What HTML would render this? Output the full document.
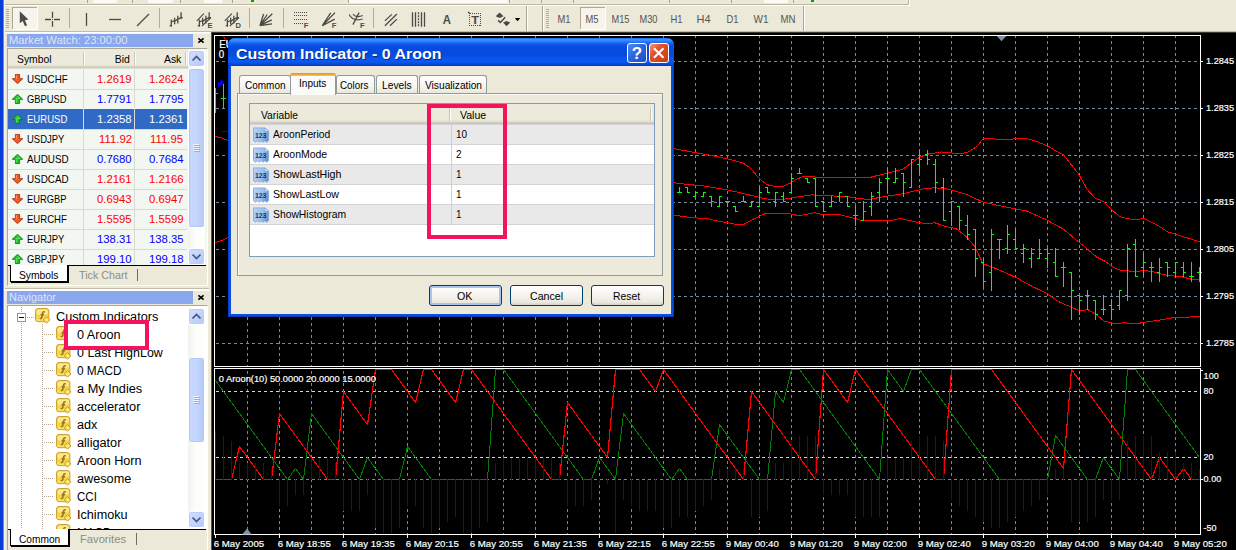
<!DOCTYPE html>
<html><head><meta charset="utf-8"><title>Custom Indicator - 0 Aroon</title>
<style>
*{box-sizing:border-box;margin:0;padding:0}
html,body{width:1236px;height:550px;overflow:hidden;background:#ECE9D8;font-family:"Liberation Sans",sans-serif;font-size:11px;color:#000}
.abs{position:absolute}
#root{position:relative;width:1236px;height:550px;overflow:hidden;background:#ECE9D8}
.t{position:absolute;white-space:nowrap;line-height:1}
.dlg-frame{background:#0650e2;border-radius:7px 7px 0 0;box-shadow:inset 1px 0 0 #0b3fd0,inset -1px 0 0 #0a34b8,inset 0 -1px 0 #0a34b8}
.dlg-title{border-radius:7px 7px 0 0;background:linear-gradient(180deg,#1c6aee 0,#3f93ff 6%,#2a7af8 13%,#0d55e8 23%,#064ae0 36%,#064ae0 60%,#0b55ec 72%,#0c58f0 85%,#0848dc 93%,#0438c4 100%)}
.tbtn{border:1px solid #fff;border-radius:3px}
.tbtn.help{background:linear-gradient(135deg,#4f8cf0 0,#2a63dc 50%,#1f4fc4 100%)}
.tbtn.help span{position:absolute;left:0;top:0;width:18px;text-align:center;color:#fff;font-weight:bold;font-size:17px;line-height:19px}
.tbtn.close{background:linear-gradient(135deg,#f0a080 0,#e2512c 35%,#c93a14 100%)}
.tbtn.close svg{position:absolute;left:-1px;top:-1px}
.dlg-body{background:#ece9d8}
.pane{border:1px solid #919b9c;background:#edeadb;box-shadow:inset 1px 1px 0 #fbfaf6}
.tab{border:1px solid #919b9c;border-bottom:none;border-radius:3px 3px 0 0;background:linear-gradient(180deg,#fff 0,#f6f5ef 60%,#e9e7dc 100%)}
.tab.sel{background:#fbfbf8;border-top:none}
.tab.sel:before{content:"";position:absolute;left:-1px;top:0;width:46px;height:3px;border-radius:3px 3px 0 0;background:linear-gradient(180deg,#e68b2c,#ffc73c)}
.lv{border:1px solid #7f9db9;background:#fff}
.lvh{background:linear-gradient(180deg,#ebeadb 0,#ebeadb 80%,#e0dcca 88%,#d1cdbc 94%,#c5c1b0 100%)}
.lvsep{background:linear-gradient(90deg,#c7c5b2 50%,#fff 50%)}
.row{border-top:1px solid #d4d4d4;border-bottom:1px solid #d4d4d4;background:#fff}
.row.odd{background:#e9e9e9}
.btn{border:1px solid #003c74;border-radius:3px;background:linear-gradient(180deg,#fff 0,#f4f3ee 50%,#ebe9df 85%,#d6d0c5 100%)}
.btn.def{box-shadow:inset 0 0 0 2px #a9c3f0}
.dock-title{background:#8aa6ec}
.mwh{background:linear-gradient(180deg,#ebeadb 0,#ebeadb 78%,#e2decd 84%,#d4d0bf 90%,#c8c4b3 95%,#f8f8f4 100%)}
.sbtn{border:1px solid #fff;border-radius:3px;background:linear-gradient(135deg,#d3e0fd 0,#c1d2fb 60%,#b4c8f6 100%);box-shadow:inset 0 0 0 1px #b9cdf9}
.sthumb{border:1px solid #fff;border-radius:3px;background:linear-gradient(90deg,#c9d9fd 0,#c3d5fd 50%,#b7caf5 100%);box-shadow:inset 0 0 0 1px #b4c8f6}
</style></head>
<body><div id="root">
<div class="abs" style="left:0;top:0;width:4px;height:550px;background:linear-gradient(90deg,#0a3cd8 0,#0a3cd8 3px,#6785e6 3px)"></div>
<svg class="abs" style="left:0;top:0" width="1236" height="34" viewBox="0 0 1236 34" font-family="Liberation Sans, sans-serif">
<g shape-rendering="crispEdges">
<rect x="4" y="0" width="905" height="4" fill="#ece9d8"/>
<rect x="93" y="0" width="24" height="3" fill="#fbfaf6"/>
<rect x="148" y="0" width="25" height="3" fill="#fbfaf6"/>
<rect x="204" y="0" width="18" height="3" fill="#fbfaf6"/>
<rect x="349" y="0" width="159" height="3" fill="#fbfaf6"/>
<rect x="764" y="0" width="24" height="3" fill="#fbfaf6"/>
<rect x="87" y="0" width="1" height="3" fill="#a9a392"/>
<rect x="132" y="0" width="1" height="3" fill="#a9a392"/>
<rect x="180" y="0" width="1" height="3" fill="#a9a392"/>
<rect x="232" y="0" width="1" height="3" fill="#a9a392"/>
<rect x="348" y="0" width="1" height="3" fill="#a9a392"/>
<rect x="509" y="0" width="1" height="3" fill="#a9a392"/>
<rect x="541" y="0" width="1" height="3" fill="#a9a392"/>
<rect x="573" y="0" width="1" height="3" fill="#a9a392"/>
<rect x="669" y="0" width="1" height="3" fill="#a9a392"/>
<rect x="731" y="0" width="1" height="3" fill="#a9a392"/>
<rect x="793" y="0" width="1" height="3" fill="#a9a392"/>
<rect x="251" y="0" width="3" height="2" fill="#00a000"/><rect x="811" y="0" width="3" height="2" fill="#00a000"/>
<rect x="4" y="4" width="905" height="1" fill="#bdb5a2"/>
<rect x="908" y="0" width="1" height="5" fill="#bdb5a2"/>
<rect x="4" y="5" width="906" height="1" fill="#fff"/><rect x="909" y="0" width="1" height="6" fill="#fff"/>
<rect x="4" y="31" width="1232" height="1" fill="#c4bca8"/><rect x="212" y="32" width="1024" height="1" fill="#3a362c"/>
<rect x="4" y="32" width="208" height="1" fill="#fff"/>
<rect x="6" y="9" width="3" height="1" fill="#b5ad9b"/>
<rect x="6" y="11" width="3" height="1" fill="#b5ad9b"/>
<rect x="6" y="13" width="3" height="1" fill="#b5ad9b"/>
<rect x="6" y="15" width="3" height="1" fill="#b5ad9b"/>
<rect x="6" y="17" width="3" height="1" fill="#b5ad9b"/>
<rect x="6" y="19" width="3" height="1" fill="#b5ad9b"/>
<rect x="6" y="21" width="3" height="1" fill="#b5ad9b"/>
<rect x="6" y="23" width="3" height="1" fill="#b5ad9b"/>
<rect x="6" y="25" width="3" height="1" fill="#b5ad9b"/>
<rect x="6" y="27" width="3" height="1" fill="#b5ad9b"/>
<rect x="546" y="9" width="3" height="1" fill="#b5ad9b"/>
<rect x="546" y="11" width="3" height="1" fill="#b5ad9b"/>
<rect x="546" y="13" width="3" height="1" fill="#b5ad9b"/>
<rect x="546" y="15" width="3" height="1" fill="#b5ad9b"/>
<rect x="546" y="17" width="3" height="1" fill="#b5ad9b"/>
<rect x="546" y="19" width="3" height="1" fill="#b5ad9b"/>
<rect x="546" y="21" width="3" height="1" fill="#b5ad9b"/>
<rect x="546" y="23" width="3" height="1" fill="#b5ad9b"/>
<rect x="546" y="25" width="3" height="1" fill="#b5ad9b"/>
<rect x="546" y="27" width="3" height="1" fill="#b5ad9b"/>
<rect x="69" y="8" width="1" height="20" fill="#b5ad99"/>
<rect x="159" y="8" width="1" height="20" fill="#b5ad99"/>
<rect x="249" y="8" width="1" height="20" fill="#b5ad99"/>
<rect x="283" y="8" width="1" height="20" fill="#b5ad99"/>
<rect x="373" y="8" width="1" height="20" fill="#b5ad99"/>
<rect x="526" y="6" width="1" height="25" fill="#aca592"/><rect x="527" y="6" width="1" height="25" fill="#fff"/>
<rect x="542" y="6" width="1" height="25" fill="#aca592"/><rect x="543" y="6" width="1" height="25" fill="#fff"/>
<rect x="803" y="6" width="1" height="25" fill="#aca592"/><rect x="804" y="6" width="1" height="25" fill="#fff"/>
<rect x="12" y="7" width="26" height="23" fill="#f6f4ec"/>
<rect x="12" y="7" width="26" height="1" fill="#b0a893"/><rect x="12" y="7" width="1" height="23" fill="#b0a893"/>
<rect x="12" y="29" width="26" height="1" fill="#fff"/><rect x="37" y="7" width="1" height="23" fill="#fff"/>
<rect x="580" y="7" width="26" height="23" fill="#f6f4ec"/>
<rect x="580" y="7" width="26" height="1" fill="#b0a893"/><rect x="580" y="7" width="1" height="23" fill="#b0a893"/>
<rect x="580" y="29" width="26" height="1" fill="#fff"/><rect x="605" y="7" width="1" height="23" fill="#fff"/>
</g>
<g stroke="#4b4b45" stroke-width="1.3" fill="none" stroke-linecap="butt">
<path d="M19.8 11.3V23.3L22.7 21L25 26.2L27.1 25.3L24.9 20.2L28.4 19.6Z" fill="#4b4b45" stroke="none"/>
<path d="M45 19.5H51M54 19.5H60M52.5 11.8V18M52.5 21V26.8"/><path d="M52 19.5H53" stroke-width="1"/>
<path d="M86.5 13V25.8"/><path d="M109 19.5H121"/><path d="M137 26L149 14"/>
<path d="M171.3 19.5V26.8M169.7 25.7H171.3M171.3 22L174.6 20.5M174.6 17.7V24.2M174.6 21.5L177.8 19M177.8 15.8V23.5M177.8 19.5L181.1 17.3M181.1 12.2V19.2M181.1 17.7H182.7"/>
<path d="M199.4 19.5V26.8M197.8 25.7H199.4M199.4 22L202.7 20.5M202.7 17.7V24.2M202.7 21.5L205.9 19M205.9 15.8V23.5M205.9 19.5L209.2 17.3M209.2 12.2V19.2M209.2 17.7H210.8"/>
<path d="M196.8 20.9L203.9 13.6M201.9 26L211 17.5" stroke-width="1.1"/>
<path d="M227.4 19.5V26.8M225.8 25.7H227.4M227.4 22L230.7 20.5M230.7 17.7V24.2M230.7 21.5L233.9 19M233.9 15.8V23.5M233.9 19.5L237.2 17.3M237.2 12.2V19.2M237.2 17.7H238.8"/>
<path d="M224.8 20.9L231.9 13.6M229.9 26L239 17.5" stroke-width="1.1"/>
<path d="M259.9 25.7L263.6 14M259.9 25.7L267.2 14.5M259.9 25.7L272.3 13.7M259.9 25.7L271.8 19.8M259.9 25.7L272 23.9"/>
<g stroke-dasharray="1 1" stroke-width="1.1" shape-rendering="crispEdges"><path d="M294 12.5H307M294 15.5H307M294 19.5H307M294 23.5H303"/></g>
<path d="M322.3 25.7L330.7 12.9M322.3 25.7L335 12.6M322.3 25.7L334.7 19.1"/>
<path d="M352.9 24.6L359.1 12.6"/><path d="M349.2 14.4Q351.5 19.2 357 19.8Q360 20 362.7 19.1M352.9 14.2Q354.8 16.6 358 16.6Q360.8 16.4 362.7 15.4" stroke-width="1.1"/>
<path d="M384.9 20.9L391.8 14.4M384.9 25.7L396.9 14M390 25.7L396.9 19.1"/>
<path d="M412.5 12.2V26.8M415.5 12.2V26.8M421.5 12.2V26.8M424.5 12.2V26.8"/><path d="M418.5 12.2V26.8" stroke-dasharray="2 1"/>
<rect x="469.5" y="13.5" width="11" height="12" stroke-dasharray="1 1" stroke-width="1.1" shape-rendering="crispEdges"/><path d="M468 12L470.2 13.8" />
<path d="M499.5 12.5L503.5 16.3L499.5 18L495.7 16.3Z" fill="#4b4b45" stroke="none"/><path d="M506.6 26.2L503 22.6L506.6 21L510.2 22.6Z" fill="#4b4b45" stroke="none"/><path d="M498 20.4L500.4 22.4L505.2 17.2" stroke-width="1.5"/>
<path d="M514.8 18H520.2L517.5 21.2Z" fill="#000" stroke="none"/>
</g>
<g fill="#4b4b45" font-weight="bold" font-size="7.6px">
<text x="207.5" y="27.9">E</text><text x="235.6" y="27.9">D</text><text x="303.7" y="27.8">F</text><text x="331.7" y="27.8">F</text><text x="360" y="27.8">F</text>
</g>
<text x="442.8" y="23.9" font-size="12.3px" font-weight="bold" fill="#4b4b45" textLength="8.2" lengthAdjust="spacingAndGlyphs">A</text>
<text x="471.3" y="24.1" font-size="10.6px" font-weight="bold" fill="#4b4b45" textLength="7.8" lengthAdjust="spacingAndGlyphs">T</text>
<text x="557.5" y="23.3" font-size="11px" fill="#55554f" textLength="13" lengthAdjust="spacingAndGlyphs">M1</text>
<text x="585.5" y="23.3" font-size="11px" fill="#55554f" textLength="13" lengthAdjust="spacingAndGlyphs">M5</text>
<text x="611.5" y="23.3" font-size="11px" fill="#55554f" textLength="18" lengthAdjust="spacingAndGlyphs">M15</text>
<text x="639.5" y="23.3" font-size="11px" fill="#55554f" textLength="18" lengthAdjust="spacingAndGlyphs">M30</text>
<text x="670.5" y="23.3" font-size="11px" fill="#55554f" textLength="12" lengthAdjust="spacingAndGlyphs">H1</text>
<text x="696.5" y="23.3" font-size="11px" fill="#55554f" textLength="14" lengthAdjust="spacingAndGlyphs">H4</text>
<text x="726.5" y="23.3" font-size="11px" fill="#55554f" textLength="12" lengthAdjust="spacingAndGlyphs">D1</text>
<text x="753.5" y="23.3" font-size="11px" fill="#55554f" textLength="15" lengthAdjust="spacingAndGlyphs">W1</text>
<text x="780.5" y="23.3" font-size="11px" fill="#55554f" textLength="15" lengthAdjust="spacingAndGlyphs">MN</text>
</svg>
<div class="abs " style="left:4px;top:32px;width:206px;height:1px;background:#fff"></div>
<div class="abs " style="left:4px;top:33px;width:206px;height:1px;background:#f6f4e8"></div>
<div class="abs " style="left:4px;top:0px;width:1px;height:550px;background:#f4f3ee"></div>
<div class="abs dock-title" style="left:7px;top:34px;width:186px;height:13px;"></div>
<div class="t " style="left:9.30px;top:35.29px;font-size:11px;color:#dde6f8;transform:scaleX(1.0183);transform-origin:0 0;">Market Watch: 23:00:00</div>
<svg class="abs" style="left:197px;top:37px" width="8" height="7"><path d="M1.4 1.4L6.6 5.6M6.6 1.4L1.4 5.6" stroke="#000" stroke-width="1.7"/></svg>
<div class="abs " style="left:7px;top:48px;width:201px;height:238px;border:1px solid #aca899;border-right-color:#fff;border-bottom-color:#fff;background:#f3f7f2"></div>
<div class="abs mwh" style="left:8px;top:49px;width:180px;height:20px;"></div>
<div class="abs " style="left:83px;top:52px;width:2px;height:13px;background:linear-gradient(90deg,#c9c6b4 50%,#fff 50%)"></div>
<div class="abs " style="left:134px;top:52px;width:2px;height:13px;background:linear-gradient(90deg,#c9c6b4 50%,#fff 50%)"></div>
<div class="abs " style="left:185px;top:52px;width:2px;height:13px;background:linear-gradient(90deg,#c9c6b4 50%,#fff 50%)"></div>
<div class="t " style="left:16.50px;top:53.89px;font-size:11px;color:#000;transform:scaleX(0.9405);transform-origin:0 0;">Symbol</div>
<div class="t " style="left:114.10px;top:53.89px;font-size:11px;color:#000;transform:scaleX(0.9500);transform-origin:100% 0;">Bid</div>
<div class="t " style="left:162.86px;top:53.89px;font-size:11px;color:#000;transform:scaleX(0.9500);transform-origin:100% 0;">Ask</div>
<div class="abs " style="left:0px;top:0px;width:210px;height:265px;overflow:hidden"><div class="abs " style="left:8px;top:89px;width:179px;height:1px;background:#d9dbd3"></div>
<svg class="abs" style="left:12px;top:74px" width="11" height="10" viewBox="0 0 11 10"><path d="M5.5 9.7L10.7 4.7H7.6V0.4H3.4V4.7H0.3Z" fill="#ee5a24" stroke="#b02c0c" stroke-width="0.9"/><path d="M4.3 1.2V5.2" fill="none" stroke="#ffb48a" stroke-width="0.9" opacity="0.8"/></svg>
<div class="t " style="left:26.80px;top:74.29px;font-size:11px;color:#000;transform:scaleX(0.8880);transform-origin:0 0;">USDCHF</div>
<div class="t " style="left:98.15px;top:74.29px;font-size:11px;color:#ff0000;transform:scaleX(1.0300);transform-origin:100% 0;">1.2619</div>
<div class="t " style="left:149.55px;top:74.29px;font-size:11px;color:#ff0000;transform:scaleX(1.0300);transform-origin:100% 0;">1.2624</div>
<div class="abs " style="left:8px;top:109px;width:179px;height:1px;background:#d9dbd3"></div>
<svg class="abs" style="left:12px;top:94px" width="11" height="10" viewBox="0 0 11 10"><path d="M5.5 0.3L10.7 5.3H7.6V9.6H3.4V5.3H0.3Z" fill="#22c32a" stroke="#0b7a12" stroke-width="0.9"/><path d="M5.5 2L8 4.6H4.2V8.6" fill="none" stroke="#9df59f" stroke-width="0.8" opacity="0.7"/></svg>
<div class="t " style="left:26.80px;top:94.29px;font-size:11px;color:#000;transform:scaleX(0.8503);transform-origin:0 0;">GBPUSD</div>
<div class="t " style="left:98.15px;top:94.29px;font-size:11px;color:#0000ff;transform:scaleX(1.0300);transform-origin:100% 0;">1.7791</div>
<div class="t " style="left:149.55px;top:94.29px;font-size:11px;color:#0000ff;transform:scaleX(1.0300);transform-origin:100% 0;">1.7795</div>
<div class="abs " style="left:8px;top:109px;width:179px;height:20px;background:#316ac5"></div>
<div class="abs " style="left:8px;top:129px;width:179px;height:1px;background:#d9dbd3"></div>
<svg class="abs" style="left:12px;top:114px" width="11" height="10" viewBox="0 0 11 10"><path d="M5.5 0.3L10.7 5.3H7.6V9.6H3.4V5.3H0.3Z" fill="#22c32a" stroke="#0b7a12" stroke-width="0.9"/><path d="M5.5 2L8 4.6H4.2V8.6" fill="none" stroke="#9df59f" stroke-width="0.8" opacity="0.7"/></svg>
<div class="t " style="left:26.80px;top:114.29px;font-size:11px;color:#fff;transform:scaleX(0.8676);transform-origin:0 0;">EURUSD</div>
<div class="t " style="left:98.15px;top:114.29px;font-size:11px;color:#fff;transform:scaleX(1.0300);transform-origin:100% 0;">1.2358</div>
<div class="t " style="left:149.55px;top:114.29px;font-size:11px;color:#fff;transform:scaleX(1.0300);transform-origin:100% 0;">1.2361</div>
<div class="abs " style="left:8px;top:149px;width:179px;height:1px;background:#d9dbd3"></div>
<svg class="abs" style="left:12px;top:134px" width="11" height="10" viewBox="0 0 11 10"><path d="M5.5 9.7L10.7 4.7H7.6V0.4H3.4V4.7H0.3Z" fill="#ee5a24" stroke="#b02c0c" stroke-width="0.9"/><path d="M4.3 1.2V5.2" fill="none" stroke="#ffb48a" stroke-width="0.9" opacity="0.8"/></svg>
<div class="t " style="left:26.80px;top:134.29px;font-size:11px;color:#000;transform:scaleX(0.8594);transform-origin:0 0;">USDJPY</div>
<div class="t " style="left:99.79px;top:134.29px;font-size:11px;color:#ff0000;transform:scaleX(1.0300);transform-origin:100% 0;">111.92</div>
<div class="t " style="left:151.19px;top:134.29px;font-size:11px;color:#ff0000;transform:scaleX(1.0300);transform-origin:100% 0;">111.95</div>
<div class="abs " style="left:8px;top:169px;width:179px;height:1px;background:#d9dbd3"></div>
<svg class="abs" style="left:12px;top:154px" width="11" height="10" viewBox="0 0 11 10"><path d="M5.5 0.3L10.7 5.3H7.6V9.6H3.4V5.3H0.3Z" fill="#22c32a" stroke="#0b7a12" stroke-width="0.9"/><path d="M5.5 2L8 4.6H4.2V8.6" fill="none" stroke="#9df59f" stroke-width="0.8" opacity="0.7"/></svg>
<div class="t " style="left:26.80px;top:154.29px;font-size:11px;color:#000;transform:scaleX(0.8956);transform-origin:0 0;">AUDUSD</div>
<div class="t " style="left:98.15px;top:154.29px;font-size:11px;color:#0000ff;transform:scaleX(1.0300);transform-origin:100% 0;">0.7680</div>
<div class="t " style="left:149.55px;top:154.29px;font-size:11px;color:#0000ff;transform:scaleX(1.0300);transform-origin:100% 0;">0.7684</div>
<div class="abs " style="left:8px;top:189px;width:179px;height:1px;background:#d9dbd3"></div>
<svg class="abs" style="left:12px;top:174px" width="11" height="10" viewBox="0 0 11 10"><path d="M5.5 9.7L10.7 4.7H7.6V0.4H3.4V4.7H0.3Z" fill="#ee5a24" stroke="#b02c0c" stroke-width="0.9"/><path d="M4.3 1.2V5.2" fill="none" stroke="#ffb48a" stroke-width="0.9" opacity="0.8"/></svg>
<div class="t " style="left:26.80px;top:174.29px;font-size:11px;color:#000;transform:scaleX(0.8956);transform-origin:0 0;">USDCAD</div>
<div class="t " style="left:98.15px;top:174.29px;font-size:11px;color:#ff0000;transform:scaleX(1.0300);transform-origin:100% 0;">1.2161</div>
<div class="t " style="left:149.55px;top:174.29px;font-size:11px;color:#ff0000;transform:scaleX(1.0300);transform-origin:100% 0;">1.2166</div>
<div class="abs " style="left:8px;top:209px;width:179px;height:1px;background:#d9dbd3"></div>
<svg class="abs" style="left:12px;top:194px" width="11" height="10" viewBox="0 0 11 10"><path d="M5.5 9.7L10.7 4.7H7.6V0.4H3.4V4.7H0.3Z" fill="#ee5a24" stroke="#b02c0c" stroke-width="0.9"/><path d="M4.3 1.2V5.2" fill="none" stroke="#ffb48a" stroke-width="0.9" opacity="0.8"/></svg>
<div class="t " style="left:26.80px;top:194.29px;font-size:11px;color:#000;transform:scaleX(0.8503);transform-origin:0 0;">EURGBP</div>
<div class="t " style="left:98.15px;top:194.29px;font-size:11px;color:#ff0000;transform:scaleX(1.0300);transform-origin:100% 0;">0.6943</div>
<div class="t " style="left:149.55px;top:194.29px;font-size:11px;color:#ff0000;transform:scaleX(1.0300);transform-origin:100% 0;">0.6947</div>
<div class="abs " style="left:8px;top:229px;width:179px;height:1px;background:#d9dbd3"></div>
<svg class="abs" style="left:12px;top:214px" width="11" height="10" viewBox="0 0 11 10"><path d="M5.5 9.7L10.7 4.7H7.6V0.4H3.4V4.7H0.3Z" fill="#ee5a24" stroke="#b02c0c" stroke-width="0.9"/><path d="M4.3 1.2V5.2" fill="none" stroke="#ffb48a" stroke-width="0.9" opacity="0.8"/></svg>
<div class="t " style="left:26.80px;top:214.29px;font-size:11px;color:#000;transform:scaleX(0.8684);transform-origin:0 0;">EURCHF</div>
<div class="t " style="left:98.15px;top:214.29px;font-size:11px;color:#ff0000;transform:scaleX(1.0300);transform-origin:100% 0;">1.5595</div>
<div class="t " style="left:149.55px;top:214.29px;font-size:11px;color:#ff0000;transform:scaleX(1.0300);transform-origin:100% 0;">1.5599</div>
<div class="abs " style="left:8px;top:249px;width:179px;height:1px;background:#d9dbd3"></div>
<svg class="abs" style="left:12px;top:234px" width="11" height="10" viewBox="0 0 11 10"><path d="M5.5 0.3L10.7 5.3H7.6V9.6H3.4V5.3H0.3Z" fill="#22c32a" stroke="#0b7a12" stroke-width="0.9"/><path d="M5.5 2L8 4.6H4.2V8.6" fill="none" stroke="#9df59f" stroke-width="0.8" opacity="0.7"/></svg>
<div class="t " style="left:26.80px;top:234.29px;font-size:11px;color:#000;transform:scaleX(0.8594);transform-origin:0 0;">EURJPY</div>
<div class="t " style="left:98.15px;top:234.29px;font-size:11px;color:#0000ff;transform:scaleX(1.0300);transform-origin:100% 0;">138.31</div>
<div class="t " style="left:149.55px;top:234.29px;font-size:11px;color:#0000ff;transform:scaleX(1.0300);transform-origin:100% 0;">138.35</div>
<div class="abs " style="left:8px;top:269px;width:179px;height:1px;background:#d9dbd3"></div>
<svg class="abs" style="left:12px;top:254px" width="11" height="10" viewBox="0 0 11 10"><path d="M5.5 0.3L10.7 5.3H7.6V9.6H3.4V5.3H0.3Z" fill="#22c32a" stroke="#0b7a12" stroke-width="0.9"/><path d="M5.5 2L8 4.6H4.2V8.6" fill="none" stroke="#9df59f" stroke-width="0.8" opacity="0.7"/></svg>
<div class="t " style="left:26.80px;top:254.29px;font-size:11px;color:#000;transform:scaleX(0.8639);transform-origin:0 0;">GBPJPY</div>
<div class="t " style="left:98.15px;top:254.29px;font-size:11px;color:#0000ff;transform:scaleX(1.0300);transform-origin:100% 0;">199.10</div>
<div class="t " style="left:149.55px;top:254.29px;font-size:11px;color:#0000ff;transform:scaleX(1.0300);transform-origin:100% 0;">199.18</div>
<div class="abs " style="left:83px;top:69px;width:1px;height:197px;background:#d9dbd3"></div>
<div class="abs " style="left:83px;top:109px;width:1px;height:20px;background:#dcdcd4"></div>
<div class="abs " style="left:134px;top:69px;width:1px;height:197px;background:#d9dbd3"></div>
<div class="abs " style="left:134px;top:109px;width:1px;height:20px;background:#dcdcd4"></div></div>
<div class="abs " style="left:188px;top:50px;width:17px;height:215px;background:linear-gradient(90deg,#f3f1ec 0,#fcfcfa 40%,#fefefb 100%)"></div>
<div class="abs sbtn" style="left:188px;top:50px;width:17px;height:17px;"></div><svg class="abs" style="left:188px;top:50px" width="17" height="17"><path d="M4.5 10.5L8.5 6.5L12.5 10.5" fill="none" stroke="#44557f" stroke-width="1.7"/></svg>
<div class="abs sbtn" style="left:188px;top:248px;width:17px;height:17px;"></div><svg class="abs" style="left:188px;top:248px" width="17" height="17"><path d="M4.5 6.5L8.5 10.5L12.5 6.5" fill="none" stroke="#44557f" stroke-width="1.7"/></svg>
<div class="abs sthumb" style="left:188px;top:68px;width:17px;height:160px;"></div>
<svg class="abs" style="left:192px;top:144px" width="9" height="9" shape-rendering="crispEdges"><rect x="1" y="0" width="6" height="1" fill="#eef4fe"/><rect x="2" y="1" width="6" height="1" fill="#8cb0f8"/><rect x="1" y="2" width="6" height="1" fill="#eef4fe"/><rect x="2" y="3" width="6" height="1" fill="#8cb0f8"/><rect x="1" y="4" width="6" height="1" fill="#eef4fe"/><rect x="2" y="5" width="6" height="1" fill="#8cb0f8"/><rect x="1" y="6" width="6" height="1" fill="#eef4fe"/><rect x="2" y="7" width="6" height="1" fill="#8cb0f8"/></svg>
<div class="abs " style="left:8px;top:265px;width:198px;height:1px;background:#000"></div>
<div class="abs " style="left:8px;top:266px;width:199px;height:19px;background:#ece9d8"></div>
<div class="abs " style="left:10px;top:265px;width:58px;height:17px;background:#fff;border:1px solid #000;border-top:none;box-shadow:1px 1px 0 #000"></div>
<div class="t " style="left:19.20px;top:269.69px;font-size:11px;color:#000;transform:scaleX(0.9364);transform-origin:0 0;">Symbols</div>
<div class="t " style="left:78.80px;top:269.69px;font-size:11px;color:#8d8d82;transform:scaleX(0.9756);transform-origin:0 0;">Tick Chart</div>
<div class="abs " style="left:137px;top:269px;width:1px;height:12px;background:#6f6f66"></div>
<div class="abs " style="left:5px;top:288px;width:204px;height:1px;background:#c2bcaa"></div>
<div class="abs " style="left:5px;top:289px;width:204px;height:2px;background:#fff"></div>
<div class="abs dock-title" style="left:7px;top:291px;width:186px;height:13px;"></div>
<div class="t " style="left:9.30px;top:292.29px;font-size:11px;color:#dde6f8;transform:scaleX(0.9983);transform-origin:0 0;">Navigator</div>
<svg class="abs" style="left:197px;top:294px" width="8" height="7"><path d="M1.4 1.4L6.6 5.6M6.6 1.4L1.4 5.6" stroke="#000" stroke-width="1.7"/></svg>
<div class="abs " style="left:7px;top:305px;width:201px;height:245px;border:1px solid #aca899;border-right-color:#fff;border-bottom:none;background:#fff"></div>
<div class="abs " style="left:0px;top:0px;width:188px;height:529px;overflow:hidden"><svg class="abs" style="left:0;top:0" width="210" height="529" shape-rendering="crispEdges"><g stroke="#b9a392" stroke-width="1" stroke-dasharray="1 1" fill="none"><path d="M21.5 307V312M21.5 323V529M27 317.5H35M42.5 324V529"/><path d="M44 334.5H54"/><path d="M44 352.5H54"/><path d="M44 370.5H54"/><path d="M44 388.5H54"/><path d="M44 406.5H54"/><path d="M44 424.5H54"/><path d="M44 442.5H54"/><path d="M44 460.5H54"/><path d="M44 478.5H54"/><path d="M44 496.5H54"/><path d="M44 514.5H54"/></g><rect x="17.5" y="313.5" width="8" height="8" fill="#fff" stroke="#7b9ebd"/><path d="M19 317.5H24" stroke="#000"/></svg>
<svg class="abs" style="left:35px;top:308px" width="16" height="16" viewBox="0 0 16 16"><rect x="0.5" y="0.5" width="13.4" height="13.2" rx="2.6" fill="#f4d448" stroke="#cfa02c"/><rect x="1.6" y="1.5" width="11.2" height="5.2" rx="2" fill="#fcf0a4" opacity="0.75"/><rect x="1.6" y="11" width="11.2" height="1.8" rx="0.9" fill="#fbe779" opacity="0.9"/><path d="M9.8 4.1C8.7 3.3 7.7 4 7.5 5.4L6.8 9.4C6.6 10.6 5.7 10.9 4.8 10.3M5.6 6.6H9.1" fill="none" stroke="#9a7416" stroke-width="1.55"/><path d="M11.6 8.6L14.9 11.9L11.6 15.2L8.3 11.9Z" fill="#f8dc5c" stroke="#c6962a" stroke-width="0.9"/><path d="M11.6 10.2L13.3 11.9L11.6 13.2L9.9 11.9Z" fill="#fdf2b0" opacity="0.7"/></svg>
<div class="t " style="left:56.30px;top:310.72px;font-size:12.5px;color:#000;transform:scaleX(1.0155);transform-origin:0 0;">Custom Indicators</div>
<svg class="abs" style="left:56px;top:326px" width="16" height="16" viewBox="0 0 16 16"><rect x="0.5" y="0.5" width="13.4" height="13.2" rx="2.6" fill="#f4d448" stroke="#cfa02c"/><rect x="1.6" y="1.5" width="11.2" height="5.2" rx="2" fill="#fcf0a4" opacity="0.75"/><rect x="1.6" y="11" width="11.2" height="1.8" rx="0.9" fill="#fbe779" opacity="0.9"/><path d="M9.8 4.1C8.7 3.3 7.7 4 7.5 5.4L6.8 9.4C6.6 10.6 5.7 10.9 4.8 10.3M5.6 6.6H9.1" fill="none" stroke="#9a7416" stroke-width="1.55"/><path d="M11.6 8.6L14.9 11.9L11.6 15.2L8.3 11.9Z" fill="#f8dc5c" stroke="#c6962a" stroke-width="0.9"/><path d="M11.6 10.2L13.3 11.9L11.6 13.2L9.9 11.9Z" fill="#fdf2b0" opacity="0.7"/></svg>
<div class="t " style="left:77.30px;top:328.82px;font-size:12.5px;color:#000;transform:scaleX(1.0120);transform-origin:0 0;">0 Aroon</div>
<svg class="abs" style="left:56px;top:344px" width="16" height="16" viewBox="0 0 16 16"><rect x="0.5" y="0.5" width="13.4" height="13.2" rx="2.6" fill="#f4d448" stroke="#cfa02c"/><rect x="1.6" y="1.5" width="11.2" height="5.2" rx="2" fill="#fcf0a4" opacity="0.75"/><rect x="1.6" y="11" width="11.2" height="1.8" rx="0.9" fill="#fbe779" opacity="0.9"/><path d="M9.8 4.1C8.7 3.3 7.7 4 7.5 5.4L6.8 9.4C6.6 10.6 5.7 10.9 4.8 10.3M5.6 6.6H9.1" fill="none" stroke="#9a7416" stroke-width="1.55"/><path d="M11.6 8.6L14.9 11.9L11.6 15.2L8.3 11.9Z" fill="#f8dc5c" stroke="#c6962a" stroke-width="0.9"/><path d="M11.6 10.2L13.3 11.9L11.6 13.2L9.9 11.9Z" fill="#fdf2b0" opacity="0.7"/></svg>
<div class="t " style="left:77.30px;top:346.82px;font-size:12.5px;color:#000;transform:scaleX(0.9958);transform-origin:0 0;">0 Last HighLow</div>
<svg class="abs" style="left:56px;top:362px" width="16" height="16" viewBox="0 0 16 16"><rect x="0.5" y="0.5" width="13.4" height="13.2" rx="2.6" fill="#f4d448" stroke="#cfa02c"/><rect x="1.6" y="1.5" width="11.2" height="5.2" rx="2" fill="#fcf0a4" opacity="0.75"/><rect x="1.6" y="11" width="11.2" height="1.8" rx="0.9" fill="#fbe779" opacity="0.9"/><path d="M9.8 4.1C8.7 3.3 7.7 4 7.5 5.4L6.8 9.4C6.6 10.6 5.7 10.9 4.8 10.3M5.6 6.6H9.1" fill="none" stroke="#9a7416" stroke-width="1.55"/><path d="M11.6 8.6L14.9 11.9L11.6 15.2L8.3 11.9Z" fill="#f8dc5c" stroke="#c6962a" stroke-width="0.9"/><path d="M11.6 10.2L13.3 11.9L11.6 13.2L9.9 11.9Z" fill="#fdf2b0" opacity="0.7"/></svg>
<div class="t " style="left:77.30px;top:364.82px;font-size:12.5px;color:#000;transform:scaleX(0.9443);transform-origin:0 0;">0 MACD</div>
<svg class="abs" style="left:56px;top:380px" width="16" height="16" viewBox="0 0 16 16"><rect x="0.5" y="0.5" width="13.4" height="13.2" rx="2.6" fill="#f4d448" stroke="#cfa02c"/><rect x="1.6" y="1.5" width="11.2" height="5.2" rx="2" fill="#fcf0a4" opacity="0.75"/><rect x="1.6" y="11" width="11.2" height="1.8" rx="0.9" fill="#fbe779" opacity="0.9"/><path d="M9.8 4.1C8.7 3.3 7.7 4 7.5 5.4L6.8 9.4C6.6 10.6 5.7 10.9 4.8 10.3M5.6 6.6H9.1" fill="none" stroke="#9a7416" stroke-width="1.55"/><path d="M11.6 8.6L14.9 11.9L11.6 15.2L8.3 11.9Z" fill="#f8dc5c" stroke="#c6962a" stroke-width="0.9"/><path d="M11.6 10.2L13.3 11.9L11.6 13.2L9.9 11.9Z" fill="#fdf2b0" opacity="0.7"/></svg>
<div class="t " style="left:77.30px;top:382.82px;font-size:12.5px;color:#000;transform:scaleX(1.0201);transform-origin:0 0;">a My Indies</div>
<svg class="abs" style="left:56px;top:398px" width="16" height="16" viewBox="0 0 16 16"><rect x="0.5" y="0.5" width="13.4" height="13.2" rx="2.6" fill="#f4d448" stroke="#cfa02c"/><rect x="1.6" y="1.5" width="11.2" height="5.2" rx="2" fill="#fcf0a4" opacity="0.75"/><rect x="1.6" y="11" width="11.2" height="1.8" rx="0.9" fill="#fbe779" opacity="0.9"/><path d="M9.8 4.1C8.7 3.3 7.7 4 7.5 5.4L6.8 9.4C6.6 10.6 5.7 10.9 4.8 10.3M5.6 6.6H9.1" fill="none" stroke="#9a7416" stroke-width="1.55"/><path d="M11.6 8.6L14.9 11.9L11.6 15.2L8.3 11.9Z" fill="#f8dc5c" stroke="#c6962a" stroke-width="0.9"/><path d="M11.6 10.2L13.3 11.9L11.6 13.2L9.9 11.9Z" fill="#fdf2b0" opacity="0.7"/></svg>
<div class="t " style="left:77.30px;top:400.82px;font-size:12.5px;color:#000;transform:scaleX(1.0253);transform-origin:0 0;">accelerator</div>
<svg class="abs" style="left:56px;top:416px" width="16" height="16" viewBox="0 0 16 16"><rect x="0.5" y="0.5" width="13.4" height="13.2" rx="2.6" fill="#f4d448" stroke="#cfa02c"/><rect x="1.6" y="1.5" width="11.2" height="5.2" rx="2" fill="#fcf0a4" opacity="0.75"/><rect x="1.6" y="11" width="11.2" height="1.8" rx="0.9" fill="#fbe779" opacity="0.9"/><path d="M9.8 4.1C8.7 3.3 7.7 4 7.5 5.4L6.8 9.4C6.6 10.6 5.7 10.9 4.8 10.3M5.6 6.6H9.1" fill="none" stroke="#9a7416" stroke-width="1.55"/><path d="M11.6 8.6L14.9 11.9L11.6 15.2L8.3 11.9Z" fill="#f8dc5c" stroke="#c6962a" stroke-width="0.9"/><path d="M11.6 10.2L13.3 11.9L11.6 13.2L9.9 11.9Z" fill="#fdf2b0" opacity="0.7"/></svg>
<div class="t " style="left:77.30px;top:418.82px;font-size:12.5px;color:#000;transform:scaleX(1.0120);transform-origin:0 0;">adx</div>
<svg class="abs" style="left:56px;top:434px" width="16" height="16" viewBox="0 0 16 16"><rect x="0.5" y="0.5" width="13.4" height="13.2" rx="2.6" fill="#f4d448" stroke="#cfa02c"/><rect x="1.6" y="1.5" width="11.2" height="5.2" rx="2" fill="#fcf0a4" opacity="0.75"/><rect x="1.6" y="11" width="11.2" height="1.8" rx="0.9" fill="#fbe779" opacity="0.9"/><path d="M9.8 4.1C8.7 3.3 7.7 4 7.5 5.4L6.8 9.4C6.6 10.6 5.7 10.9 4.8 10.3M5.6 6.6H9.1" fill="none" stroke="#9a7416" stroke-width="1.55"/><path d="M11.6 8.6L14.9 11.9L11.6 15.2L8.3 11.9Z" fill="#f8dc5c" stroke="#c6962a" stroke-width="0.9"/><path d="M11.6 10.2L13.3 11.9L11.6 13.2L9.9 11.9Z" fill="#fdf2b0" opacity="0.7"/></svg>
<div class="t " style="left:77.30px;top:436.82px;font-size:12.5px;color:#000;transform:scaleX(1.0142);transform-origin:0 0;">alligator</div>
<svg class="abs" style="left:56px;top:452px" width="16" height="16" viewBox="0 0 16 16"><rect x="0.5" y="0.5" width="13.4" height="13.2" rx="2.6" fill="#f4d448" stroke="#cfa02c"/><rect x="1.6" y="1.5" width="11.2" height="5.2" rx="2" fill="#fcf0a4" opacity="0.75"/><rect x="1.6" y="11" width="11.2" height="1.8" rx="0.9" fill="#fbe779" opacity="0.9"/><path d="M9.8 4.1C8.7 3.3 7.7 4 7.5 5.4L6.8 9.4C6.6 10.6 5.7 10.9 4.8 10.3M5.6 6.6H9.1" fill="none" stroke="#9a7416" stroke-width="1.55"/><path d="M11.6 8.6L14.9 11.9L11.6 15.2L8.3 11.9Z" fill="#f8dc5c" stroke="#c6962a" stroke-width="0.9"/><path d="M11.6 10.2L13.3 11.9L11.6 13.2L9.9 11.9Z" fill="#fdf2b0" opacity="0.7"/></svg>
<div class="t " style="left:77.30px;top:454.82px;font-size:12.5px;color:#000;transform:scaleX(1.0106);transform-origin:0 0;">Aroon Horn</div>
<svg class="abs" style="left:56px;top:470px" width="16" height="16" viewBox="0 0 16 16"><rect x="0.5" y="0.5" width="13.4" height="13.2" rx="2.6" fill="#f4d448" stroke="#cfa02c"/><rect x="1.6" y="1.5" width="11.2" height="5.2" rx="2" fill="#fcf0a4" opacity="0.75"/><rect x="1.6" y="11" width="11.2" height="1.8" rx="0.9" fill="#fbe779" opacity="0.9"/><path d="M9.8 4.1C8.7 3.3 7.7 4 7.5 5.4L6.8 9.4C6.6 10.6 5.7 10.9 4.8 10.3M5.6 6.6H9.1" fill="none" stroke="#9a7416" stroke-width="1.55"/><path d="M11.6 8.6L14.9 11.9L11.6 15.2L8.3 11.9Z" fill="#f8dc5c" stroke="#c6962a" stroke-width="0.9"/><path d="M11.6 10.2L13.3 11.9L11.6 13.2L9.9 11.9Z" fill="#fdf2b0" opacity="0.7"/></svg>
<div class="t " style="left:77.30px;top:472.82px;font-size:12.5px;color:#000;transform:scaleX(1.0150);transform-origin:0 0;">awesome</div>
<svg class="abs" style="left:56px;top:488px" width="16" height="16" viewBox="0 0 16 16"><rect x="0.5" y="0.5" width="13.4" height="13.2" rx="2.6" fill="#f4d448" stroke="#cfa02c"/><rect x="1.6" y="1.5" width="11.2" height="5.2" rx="2" fill="#fcf0a4" opacity="0.75"/><rect x="1.6" y="11" width="11.2" height="1.8" rx="0.9" fill="#fbe779" opacity="0.9"/><path d="M9.8 4.1C8.7 3.3 7.7 4 7.5 5.4L6.8 9.4C6.6 10.6 5.7 10.9 4.8 10.3M5.6 6.6H9.1" fill="none" stroke="#9a7416" stroke-width="1.55"/><path d="M11.6 8.6L14.9 11.9L11.6 15.2L8.3 11.9Z" fill="#f8dc5c" stroke="#c6962a" stroke-width="0.9"/><path d="M11.6 10.2L13.3 11.9L11.6 13.2L9.9 11.9Z" fill="#fdf2b0" opacity="0.7"/></svg>
<div class="t " style="left:77.30px;top:490.82px;font-size:12.5px;color:#000;transform:scaleX(0.9244);transform-origin:0 0;">CCI</div>
<svg class="abs" style="left:56px;top:506px" width="16" height="16" viewBox="0 0 16 16"><rect x="0.5" y="0.5" width="13.4" height="13.2" rx="2.6" fill="#f4d448" stroke="#cfa02c"/><rect x="1.6" y="1.5" width="11.2" height="5.2" rx="2" fill="#fcf0a4" opacity="0.75"/><rect x="1.6" y="11" width="11.2" height="1.8" rx="0.9" fill="#fbe779" opacity="0.9"/><path d="M9.8 4.1C8.7 3.3 7.7 4 7.5 5.4L6.8 9.4C6.6 10.6 5.7 10.9 4.8 10.3M5.6 6.6H9.1" fill="none" stroke="#9a7416" stroke-width="1.55"/><path d="M11.6 8.6L14.9 11.9L11.6 15.2L8.3 11.9Z" fill="#f8dc5c" stroke="#c6962a" stroke-width="0.9"/><path d="M11.6 10.2L13.3 11.9L11.6 13.2L9.9 11.9Z" fill="#fdf2b0" opacity="0.7"/></svg>
<div class="t " style="left:77.30px;top:508.82px;font-size:12.5px;color:#000;transform:scaleX(1.0120);transform-origin:0 0;">Ichimoku</div>
<svg class="abs" style="left:56px;top:524px" width="16" height="16" viewBox="0 0 16 16"><rect x="0.5" y="0.5" width="13.4" height="13.2" rx="2.6" fill="#f4d448" stroke="#cfa02c"/><rect x="1.6" y="1.5" width="11.2" height="5.2" rx="2" fill="#fcf0a4" opacity="0.75"/><rect x="1.6" y="11" width="11.2" height="1.8" rx="0.9" fill="#fbe779" opacity="0.9"/><path d="M9.8 4.1C8.7 3.3 7.7 4 7.5 5.4L6.8 9.4C6.6 10.6 5.7 10.9 4.8 10.3M5.6 6.6H9.1" fill="none" stroke="#9a7416" stroke-width="1.55"/><path d="M11.6 8.6L14.9 11.9L11.6 15.2L8.3 11.9Z" fill="#f8dc5c" stroke="#c6962a" stroke-width="0.9"/><path d="M11.6 10.2L13.3 11.9L11.6 13.2L9.9 11.9Z" fill="#fdf2b0" opacity="0.7"/></svg>
<div class="t " style="left:77.30px;top:526.82px;font-size:12.5px;color:#000;transform:scaleX(0.9374);transform-origin:0 0;">MACD</div></div>
<div class="abs " style="left:64px;top:320px;width:85px;height:30px;border:4px solid #f5145c;background:#fff"></div>
<div class="t " style="left:77.30px;top:328.82px;font-size:12.5px;color:#000;transform:scaleX(1.0120);transform-origin:0 0;">0 Aroon</div>
<div class="abs " style="left:188px;top:308px;width:17px;height:220px;background:linear-gradient(90deg,#f3f1ec 0,#fcfcfa 40%,#fefefb 100%)"></div>
<div class="abs sbtn" style="left:188px;top:308px;width:17px;height:17px;"></div><svg class="abs" style="left:188px;top:308px" width="17" height="17"><path d="M4.5 10.5L8.5 6.5L12.5 10.5" fill="none" stroke="#44557f" stroke-width="1.7"/></svg>
<div class="abs sbtn" style="left:188px;top:511px;width:17px;height:17px;"></div><svg class="abs" style="left:188px;top:511px" width="17" height="17"><path d="M4.5 6.5L8.5 10.5L12.5 6.5" fill="none" stroke="#44557f" stroke-width="1.7"/></svg>
<div class="abs sthumb" style="left:188px;top:357px;width:17px;height:86px;"></div>
<svg class="abs" style="left:192px;top:396px" width="9" height="9" shape-rendering="crispEdges"><rect x="1" y="0" width="6" height="1" fill="#eef4fe"/><rect x="2" y="1" width="6" height="1" fill="#8cb0f8"/><rect x="1" y="2" width="6" height="1" fill="#eef4fe"/><rect x="2" y="3" width="6" height="1" fill="#8cb0f8"/><rect x="1" y="4" width="6" height="1" fill="#eef4fe"/><rect x="2" y="5" width="6" height="1" fill="#8cb0f8"/><rect x="1" y="6" width="6" height="1" fill="#eef4fe"/><rect x="2" y="7" width="6" height="1" fill="#8cb0f8"/></svg>
<div class="abs " style="left:8px;top:529px;width:198px;height:1px;background:#000"></div>
<div class="abs " style="left:8px;top:530px;width:199px;height:20px;background:#ece9d8"></div>
<div class="abs " style="left:10px;top:529px;width:59px;height:17px;background:#fff;border:1px solid #000;border-top:none;box-shadow:1px 1px 0 #000"></div>
<div class="t " style="left:19.20px;top:533.79px;font-size:11px;color:#000;transform:scaleX(0.9233);transform-origin:0 0;">Common</div>
<div class="t " style="left:80.00px;top:533.79px;font-size:11px;color:#8d8d82;transform:scaleX(1.0169);transform-origin:0 0;">Favorites</div>
<div class="abs " style="left:136px;top:533px;width:1px;height:12px;background:#6f6f66"></div>
<svg class="abs" style="left:0;top:0" width="1236" height="550" viewBox="0 0 1236 550" font-family="Liberation Sans, sans-serif">
<rect x="212" y="33" width="1024" height="517" fill="#000"/><rect x="212" y="32" width="1024" height="1" fill="#3f3a30"/>
<rect x="211" y="32" width="1" height="518" fill="#5a5548"/>
<g stroke="#778899" stroke-width="1" stroke-dasharray="3 3" shape-rendering="crispEdges" fill="none">
<path d="M247.5 35V366"/>
<path d="M247.5 371V534"/>
<path d="M279.5 35V366"/>
<path d="M279.5 371V534"/>
<path d="M311.5 35V366"/>
<path d="M311.5 371V534"/>
<path d="M343.5 35V366"/>
<path d="M343.5 371V534"/>
<path d="M375.5 35V366"/>
<path d="M375.5 371V534"/>
<path d="M407.5 35V366"/>
<path d="M407.5 371V534"/>
<path d="M439.5 35V366"/>
<path d="M439.5 371V534"/>
<path d="M471.5 35V366"/>
<path d="M471.5 371V534"/>
<path d="M503.5 35V366"/>
<path d="M503.5 371V534"/>
<path d="M535.5 35V366"/>
<path d="M535.5 371V534"/>
<path d="M567.5 35V366"/>
<path d="M567.5 371V534"/>
<path d="M599.5 35V366"/>
<path d="M599.5 371V534"/>
<path d="M631.5 35V366"/>
<path d="M631.5 371V534"/>
<path d="M663.5 35V366"/>
<path d="M663.5 371V534"/>
<path d="M695.5 35V366"/>
<path d="M695.5 371V534"/>
<path d="M727.5 35V366"/>
<path d="M727.5 371V534"/>
<path d="M759.5 35V366"/>
<path d="M759.5 371V534"/>
<path d="M791.5 35V366"/>
<path d="M791.5 371V534"/>
<path d="M823.5 35V366"/>
<path d="M823.5 371V534"/>
<path d="M855.5 35V366"/>
<path d="M855.5 371V534"/>
<path d="M887.5 35V366"/>
<path d="M887.5 371V534"/>
<path d="M919.5 35V366"/>
<path d="M919.5 371V534"/>
<path d="M951.5 35V366"/>
<path d="M951.5 371V534"/>
<path d="M983.5 35V366"/>
<path d="M983.5 371V534"/>
<path d="M1015.5 35V366"/>
<path d="M1015.5 371V534"/>
<path d="M1047.5 35V366"/>
<path d="M1047.5 371V534"/>
<path d="M1079.5 35V366"/>
<path d="M1079.5 371V534"/>
<path d="M1111.5 35V366"/>
<path d="M1111.5 371V534"/>
<path d="M1143.5 35V366"/>
<path d="M1143.5 371V534"/>
<path d="M1175.5 35V366"/>
<path d="M1175.5 371V534"/>
<path d="M216 61.5H1200"/>
<path d="M216 108.5H1200"/>
<path d="M216 155.5H1200"/>
<path d="M216 202.5H1200"/>
<path d="M216 249.5H1200"/>
<path d="M216 296.5H1200"/>
<path d="M216 343.5H1200"/>
<path d="M216 479.5H1200"/>
</g>
<g stroke="#d8d8c8" stroke-width="1" stroke-dasharray="3 3" shape-rendering="crispEdges" fill="none">
<path d="M216 391.5H1200"/><path d="M216 457.5H1200"/>
</g>
<polyline points="215.5,380.5 223.5,391.5 231.5,402.5 239.5,413.5 247.5,424.5 255.5,435.5 263.5,446.5 271.5,457.5 279.5,468.5 287.5,479.5 295.5,468.5 303.5,479.5 311.5,413.5 319.5,424.5 327.5,435.5 335.5,446.5 343.5,457.5 351.5,468.5 359.5,479.5 367.5,457.5 375.5,468.5 383.5,479.5 391.5,479.5 399.5,479.5 407.5,446.5 415.5,457.5 423.5,468.5 431.5,479.5 439.5,479.5 447.5,479.5 455.5,479.5 463.5,479.5 471.5,479.5 479.5,479.5 487.5,479.5 495.5,369.5 503.5,369.5 511.5,380.5 519.5,391.5 527.5,402.5 535.5,413.5 543.5,424.5 551.5,435.5 559.5,446.5 567.5,457.5 575.5,468.5 583.5,479.5 591.5,479.5 599.5,457.5 607.5,468.5 615.5,479.5 623.5,413.5 631.5,424.5 639.5,435.5 647.5,446.5 655.5,457.5 663.5,468.5 671.5,479.5 679.5,468.5 687.5,479.5 695.5,479.5 703.5,479.5 711.5,479.5 719.5,424.5 727.5,435.5 735.5,446.5 743.5,457.5 751.5,468.5 759.5,479.5 767.5,479.5 775.5,391.5 783.5,402.5 791.5,369.5 799.5,369.5 807.5,380.5 815.5,391.5 823.5,402.5 831.5,413.5 839.5,424.5 847.5,435.5 855.5,446.5 863.5,457.5 871.5,468.5 879.5,479.5 887.5,369.5 895.5,380.5 903.5,391.5 911.5,369.5 919.5,369.5 927.5,380.5 935.5,391.5 943.5,402.5 951.5,413.5 959.5,424.5 967.5,435.5 975.5,446.5 983.5,457.5 991.5,468.5 999.5,479.5 1007.5,479.5 1015.5,479.5 1023.5,479.5 1031.5,479.5 1039.5,479.5 1047.5,479.5 1055.5,435.5 1063.5,446.5 1071.5,457.5 1079.5,468.5 1087.5,479.5 1095.5,479.5 1103.5,457.5 1111.5,468.5 1119.5,479.5 1127.5,369.5 1135.5,369.5 1143.5,380.5 1151.5,391.5 1159.5,402.5 1167.5,413.5 1175.5,424.5 1183.5,435.5 1191.5,446.5 1199.5,457.5" fill="none" stroke="#008000" stroke-width="1" shape-rendering="crispEdges"/>
<polyline points="215.5,479.5 223.5,479.5 231.5,479.5 239.5,446.5 247.5,457.5 255.5,468.5 263.5,479.5 271.5,479.5 279.5,413.5 287.5,424.5 295.5,435.5 303.5,446.5 311.5,457.5 319.5,468.5 327.5,479.5 335.5,479.5 343.5,391.5 351.5,402.5 359.5,413.5 367.5,424.5 375.5,369.5 383.5,369.5 391.5,369.5 399.5,380.5 407.5,391.5 415.5,402.5 423.5,369.5 431.5,369.5 439.5,380.5 447.5,391.5 455.5,402.5 463.5,369.5 471.5,369.5 479.5,380.5 487.5,391.5 495.5,402.5 503.5,413.5 511.5,424.5 519.5,435.5 527.5,446.5 535.5,457.5 543.5,468.5 551.5,479.5 559.5,479.5 567.5,402.5 575.5,413.5 583.5,424.5 591.5,435.5 599.5,446.5 607.5,457.5 615.5,369.5 623.5,369.5 631.5,369.5 639.5,369.5 647.5,380.5 655.5,391.5 663.5,369.5 671.5,380.5 679.5,391.5 687.5,402.5 695.5,413.5 703.5,424.5 711.5,435.5 719.5,446.5 727.5,457.5 735.5,468.5 743.5,479.5 751.5,391.5 759.5,402.5 767.5,413.5 775.5,424.5 783.5,435.5 791.5,446.5 799.5,457.5 807.5,468.5 815.5,479.5 823.5,369.5 831.5,380.5 839.5,391.5 847.5,402.5 855.5,369.5 863.5,380.5 871.5,391.5 879.5,402.5 887.5,413.5 895.5,424.5 903.5,435.5 911.5,446.5 919.5,457.5 927.5,468.5 935.5,479.5 943.5,479.5 951.5,369.5 959.5,369.5 967.5,369.5 975.5,369.5 983.5,369.5 991.5,369.5 999.5,380.5 1007.5,391.5 1015.5,402.5 1023.5,413.5 1031.5,424.5 1039.5,435.5 1047.5,446.5 1055.5,457.5 1063.5,468.5 1071.5,369.5 1079.5,380.5 1087.5,391.5 1095.5,402.5 1103.5,413.5 1111.5,424.5 1119.5,435.5 1127.5,446.5 1135.5,457.5 1143.5,468.5 1151.5,479.5 1159.5,457.5 1167.5,468.5 1175.5,479.5 1183.5,468.5 1191.5,479.5 1199.5,479.5" fill="none" stroke="#ff0000" stroke-width="1.15" shape-rendering="crispEdges"/>
<g stroke="#0000ff" stroke-width="1" shape-rendering="crispEdges">
<path d="M215.5 480V431"/>
<path d="M223.5 480V436"/>
<path d="M231.5 480V441"/>
<path d="M239.5 480V463"/>
<path d="M247.5 480V463"/>
<path d="M255.5 480V463"/>
<path d="M263.5 480V463"/>
<path d="M271.5 480V469"/>
<path d="M279.5 479V506"/>
<path d="M287.5 479V506"/>
<path d="M295.5 479V495"/>
<path d="M303.5 479V495"/>
<path d="M311.5 480V458"/>
<path d="M319.5 480V458"/>
<path d="M327.5 480V458"/>
<path d="M335.5 480V463"/>
<path d="M343.5 479V511"/>
<path d="M351.5 479V511"/>
<path d="M359.5 479V511"/>
<path d="M367.5 479V495"/>
<path d="M375.5 479V528"/>
<path d="M383.5 479V533"/>
<path d="M391.5 479V533"/>
<path d="M399.5 479V528"/>
<path d="M407.5 479V506"/>
<path d="M415.5 479V506"/>
<path d="M423.5 479V528"/>
<path d="M431.5 479V533"/>
<path d="M439.5 479V528"/>
<path d="M447.5 479V522"/>
<path d="M455.5 479V517"/>
<path d="M463.5 479V533"/>
<path d="M471.5 479V533"/>
<path d="M479.5 479V528"/>
<path d="M487.5 479V522"/>
<path d="M495.5 480V463"/>
<path d="M503.5 480V458"/>
<path d="M511.5 480V458"/>
<path d="M519.5 480V458"/>
<path d="M527.5 480V458"/>
<path d="M535.5 480V458"/>
<path d="M543.5 480V458"/>
<path d="M551.5 480V458"/>
<path d="M559.5 480V463"/>
<path d="M567.5 479V506"/>
<path d="M575.5 479V506"/>
<path d="M583.5 479V506"/>
<path d="M591.5 479V500"/>
<path d="M599.5 479V484"/>
<path d="M607.5 479V484"/>
<path d="M615.5 479V533"/>
<path d="M623.5 479V500"/>
<path d="M631.5 479V506"/>
<path d="M639.5 479V511"/>
<path d="M647.5 479V511"/>
<path d="M655.5 479V511"/>
<path d="M663.5 479V528"/>
<path d="M671.5 479V528"/>
<path d="M679.5 479V517"/>
<path d="M687.5 479V517"/>
<path d="M695.5 479V511"/>
<path d="M703.5 479V506"/>
<path d="M711.5 479V500"/>
<path d="M719.5 480V469"/>
<path d="M727.5 480V469"/>
<path d="M735.5 480V469"/>
<path d="M743.5 480V469"/>
<path d="M751.5 479V517"/>
<path d="M759.5 479V517"/>
<path d="M767.5 479V511"/>
<path d="M775.5 480V463"/>
<path d="M783.5 480V463"/>
<path d="M791.5 480V441"/>
<path d="M799.5 480V436"/>
<path d="M807.5 480V436"/>
<path d="M815.5 480V436"/>
<path d="M823.5 479V495"/>
<path d="M831.5 479V495"/>
<path d="M839.5 479V495"/>
<path d="M847.5 479V495"/>
<path d="M855.5 479V517"/>
<path d="M863.5 479V517"/>
<path d="M871.5 479V517"/>
<path d="M879.5 479V517"/>
<path d="M887.5 480V458"/>
<path d="M895.5 480V458"/>
<path d="M903.5 480V458"/>
<path d="M911.5 480V441"/>
<path d="M919.5 480V436"/>
<path d="M927.5 480V436"/>
<path d="M935.5 480V436"/>
<path d="M943.5 480V441"/>
<path d="M951.5 479V500"/>
<path d="M959.5 479V506"/>
<path d="M967.5 479V511"/>
<path d="M975.5 479V517"/>
<path d="M983.5 479V522"/>
<path d="M991.5 479V528"/>
<path d="M999.5 479V528"/>
<path d="M1007.5 479V522"/>
<path d="M1015.5 479V517"/>
<path d="M1023.5 479V511"/>
<path d="M1031.5 479V506"/>
<path d="M1039.5 479V500"/>
<path d="M1047.5 479V495"/>
<path d="M1055.5 480V469"/>
<path d="M1063.5 480V469"/>
<path d="M1071.5 479V522"/>
<path d="M1079.5 479V522"/>
<path d="M1087.5 479V522"/>
<path d="M1095.5 479V517"/>
<path d="M1103.5 479V500"/>
<path d="M1111.5 479V500"/>
<path d="M1119.5 479V500"/>
<path d="M1127.5 480V441"/>
<path d="M1135.5 480V436"/>
<path d="M1143.5 480V436"/>
<path d="M1151.5 480V436"/>
<path d="M1159.5 480V452"/>
<path d="M1167.5 480V452"/>
<path d="M1175.5 480V452"/>
<path d="M1183.5 480V463"/>
<path d="M1191.5 480V463"/>
<path d="M1199.5 480V469"/>
</g>
<polyline points="673.6,148.5 695.5,152.7 714.5,156.0 733.6,160.3 743.6,163.3 750.3,168.0 760.3,179.7 767.0,184.7 773.7,186.1 782.0,186.8 790.4,183.1 797.0,178.9 803.8,176.4 812.0,176.4 815.5,177.2 870.7,177.2 876.0,175.9 882.7,174.3 902.8,169.3 911.2,163.1 919.5,157.3 926.2,154.4 941.3,151.9 949.6,152.7 959.6,153.9 968.0,152.2 976.4,146.9 983.0,138.9 994.8,138.9 999.8,140.0 1009.8,139.7 1014.8,138.5 1026.5,138.5 1036.6,141.4 1050.0,147.2 1055.0,150.5 1063.4,154.7 1078.5,173.9 1086.9,189.0 1095.2,198.2 1103.6,201.5 1112.0,209.9 1120.3,216.9 1130.3,219.1 1137.0,219.6 1143.7,218.2 1157.0,224.9 1167.1,231.6 1180.5,235.8 1199.5,241.8" fill="none" stroke="#ff0000" stroke-width="1" shape-rendering="crispEdges"/>
<polyline points="673.6,182.7 686.7,184.4 703.4,185.9 726.9,189.8 743.6,193.6 760.3,197.6 767.0,199.0 783.7,199.3 793.7,197.6 803.8,196.0 812.1,194.8 820.5,195.6 837.2,196.1 847.3,196.5 855.6,198.1 864.0,199.0 870.7,199.0 876.0,198.1 882.7,196.9 902.8,193.7 922.9,189.0 932.9,187.9 942.9,188.2 953.0,190.4 966.3,194.4 983.0,202.1 999.8,205.8 1016.5,209.1 1026.5,211.0 1036.6,215.5 1046.7,219.9 1063.4,229.1 1076.8,240.5 1085.2,247.2 1096.9,257.2 1105.3,261.4 1112.0,266.4 1118.6,269.8 1127.0,270.9 1137.0,271.4 1143.7,270.6 1152.0,271.4 1160.4,273.9 1168.8,275.6 1180.5,276.5 1190.5,279.0 1199.5,279.0" fill="none" stroke="#ff0000" stroke-width="1" shape-rendering="crispEdges"/>
<polyline points="673.6,215.7 683.4,216.2 691.7,217.9 705.1,218.2 720.2,221.5 734.4,224.0 744.4,224.0 753.6,219.0 766.2,213.2 787.0,213.2 798.8,215.7 803.8,214.8 813.8,212.8 817.2,213.2 822.2,214.8 840.6,214.8 854.0,218.2 862.3,220.7 876.0,220.9 887.7,220.9 901.1,218.5 909.5,220.5 919.5,222.7 927.9,223.9 934.6,222.7 944.6,226.1 956.3,228.9 966.3,236.5 974.7,246.5 983.0,263.7 993.0,267.4 1004.8,272.4 1016.5,277.8 1033.2,287.0 1046.7,293.2 1058.4,301.5 1071.8,307.4 1079.3,310.7 1087.7,309.6 1096.9,314.9 1103.6,320.8 1110.3,322.8 1117.0,323.6 1123.6,322.8 1137.0,323.6 1147.0,321.9 1160.4,319.9 1172.1,317.9 1183.8,317.9 1190.5,316.9 1199.5,316.9" fill="none" stroke="#ff0000" stroke-width="1" shape-rendering="crispEdges"/>
<g stroke="#00ff00" stroke-width="1" shape-rendering="crispEdges" fill="none">
<path d="M679.5 187V193M677 192.5H679M680 192.5H682"/>
<path d="M687.5 187V193M685 187.5H687M688 192.5H690"/>
<path d="M695.5 192V197M693 196.5H695M696 192.5H698"/>
<path d="M703.5 192V197M701 196.5H703M704 192.5H706"/>
<path d="M711.5 196V207M709 196.5H711M712 201.5H714"/>
<path d="M719.5 196V207M717 206.5H719M720 196.5H722"/>
<path d="M727.5 201V207M725 201.5H727M728 201.5H730"/>
<path d="M735.5 206V212M733 206.5H735M736 211.5H738"/>
<path d="M743.5 196V202M741 201.5H743M744 201.5H746"/>
<path d="M751.5 201V207M749 206.5H751M752 201.5H754"/>
<path d="M759.5 187V207M757 206.5H759M760 192.5H762"/>
<path d="M767.5 187V193M765 187.5H767M768 192.5H770"/>
<path d="M775.5 192V207M773 201.5H775M776 192.5H778"/>
<path d="M783.5 192V202M781 196.5H783M784 201.5H786"/>
<path d="M791.5 173V193M789 192.5H791M792 178.5H794"/>
<path d="M799.5 168V174M797 173.5H799M800 173.5H802"/>
<path d="M807.5 178V183M805 178.5H807M808 182.5H810"/>
<path d="M815.5 178V207M813 178.5H815M816 206.5H818"/>
<path d="M823.5 201V212M821 201.5H823M824 211.5H826"/>
<path d="M831.5 196V207M829 206.5H831M832 201.5H834"/>
<path d="M839.5 192V202M837 196.5H839M840 192.5H842"/>
<path d="M847.5 196V207M845 196.5H847M848 206.5H850"/>
<path d="M855.5 206V226M853 215.5H855M856 215.5H858"/>
<path d="M863.5 201V221M861 220.5H863M864 211.5H866"/>
<path d="M871.5 192V216M869 206.5H871M872 196.5H874"/>
<path d="M879.5 178V202M877 192.5H879M880 182.5H882"/>
<path d="M887.5 168V193M885 178.5H887M888 178.5H890"/>
<path d="M895.5 168V183M893 182.5H895M896 178.5H898"/>
<path d="M903.5 173V197M901 173.5H903M904 182.5H906"/>
<path d="M911.5 159V188M909 187.5H911M912 159.5H914"/>
<path d="M919.5 150V174M917 164.5H919M920 159.5H922"/>
<path d="M927.5 150V165M925 154.5H927M928 159.5H930"/>
<path d="M935.5 159V193M933 164.5H935M936 182.5H938"/>
<path d="M943.5 178V221M941 187.5H943M944 220.5H946"/>
<path d="M951.5 201V226M949 211.5H951M952 201.5H954"/>
<path d="M959.5 206V230M957 206.5H959M960 220.5H962"/>
<path d="M967.5 215V240M965 225.5H967M968 234.5H970"/>
<path d="M975.5 229V277M973 229.5H975M976 258.5H978"/>
<path d="M983.5 258V287M981 262.5H983M984 281.5H986"/>
<path d="M991.5 229V291M989 272.5H991M992 234.5H994"/>
<path d="M999.5 239V259M997 239.5H999M1000 239.5H1002"/>
<path d="M1007.5 225V254M1005 248.5H1007M1008 234.5H1010"/>
<path d="M1015.5 229V249M1013 239.5H1015M1016 248.5H1018"/>
<path d="M1023.5 244V263M1021 253.5H1023M1024 248.5H1026"/>
<path d="M1031.5 248V268M1029 258.5H1031M1032 253.5H1034"/>
<path d="M1039.5 239V259M1037 258.5H1039M1040 253.5H1042"/>
<path d="M1047.5 248V268M1045 258.5H1047M1048 253.5H1050"/>
<path d="M1055.5 248V277M1053 262.5H1055M1056 276.5H1058"/>
<path d="M1063.5 262V287M1061 267.5H1063M1064 267.5H1066"/>
<path d="M1071.5 272V320M1069 272.5H1071M1072 290.5H1074"/>
<path d="M1079.5 295V315M1077 295.5H1079M1080 300.5H1082"/>
<path d="M1087.5 290V310M1085 295.5H1087M1088 295.5H1090"/>
<path d="M1095.5 300V320M1093 300.5H1095M1096 314.5H1098"/>
<path d="M1103.5 295V315M1101 309.5H1103M1104 309.5H1106"/>
<path d="M1111.5 300V320M1109 305.5H1111M1112 309.5H1114"/>
<path d="M1119.5 290V310M1117 305.5H1119M1120 290.5H1122"/>
<path d="M1127.5 244V301M1125 295.5H1127M1128 248.5H1130"/>
<path d="M1135.5 239V277M1133 244.5H1135M1136 276.5H1138"/>
<path d="M1143.5 253V277M1141 267.5H1143M1144 262.5H1146"/>
<path d="M1151.5 262V282M1149 267.5H1151M1152 267.5H1154"/>
<path d="M1159.5 258V282M1157 272.5H1159M1160 267.5H1162"/>
<path d="M1167.5 262V277M1165 262.5H1167M1168 267.5H1170"/>
<path d="M1175.5 262V277M1173 272.5H1175M1176 262.5H1178"/>
<path d="M1183.5 262V277M1181 267.5H1183M1184 272.5H1186"/>
<path d="M1191.5 262V282M1189 276.5H1191M1192 276.5H1194"/>
<path d="M1199.5 267V282M1197 272.5H1199M1200 272.5H1202"/>
</g>
<g stroke="#00ff00" stroke-width="1" shape-rendering="crispEdges" fill="none">
<path d="M215.5 88V113M216 93.5H218"/><path d="M223.5 84V109M221 98.5H226"/>
</g>
<path d="M218.5 87V82.5H223M221 80L224 82.5L221 85.5Z" stroke="#0000ff" fill="#0000ff" stroke-width="1"/>
<g stroke="#ff0000" stroke-width="1" fill="none" shape-rendering="crispEdges"><path d="M223.5 36L227 43"/><path d="M215 136.5C220 137 224 138.5 228 140.5"/><path d="M215 242.5C220 241.5 224 240 228 237.5"/></g>
<path d="M222 131.5H228" stroke="#0000ff" stroke-width="1" shape-rendering="crispEdges"/>
<g stroke="#fff" stroke-width="1" shape-rendering="crispEdges" fill="none">
<path d="M214 35.5H1201"/><path d="M214.5 35V367"/><path d="M214 366.5H1201"/>
<path d="M214 368.5H1201"/><path d="M214.5 368V535"/><path d="M214 534.5H1201"/>
<path d="M1200.5 35V367M1200.5 368V535"/>
<path d="M1201 61.5H1203"/>
<path d="M1201 108.5H1203"/>
<path d="M1201 155.5H1203"/>
<path d="M1201 202.5H1203"/>
<path d="M1201 249.5H1203"/>
<path d="M1201 296.5H1203"/>
<path d="M1201 343.5H1203"/>
<path d="M1201 370.5H1203"/>
<path d="M1201 479.5H1203"/>
<path d="M215.5 535V538"/>
<path d="M279.5 535V538"/>
<path d="M343.5 535V538"/>
<path d="M407.5 535V538"/>
<path d="M471.5 535V538"/>
<path d="M535.5 535V538"/>
<path d="M599.5 535V538"/>
<path d="M663.5 535V538"/>
<path d="M727.5 535V538"/>
<path d="M791.5 535V538"/>
<path d="M855.5 535V538"/>
<path d="M919.5 535V538"/>
<path d="M983.5 535V538"/>
<path d="M1047.5 535V538"/>
<path d="M1111.5 535V538"/>
<path d="M1175.5 535V538"/>
</g>
<path d="M996.8 36H1006.3L1001.5 41.3Z" fill="#7c92a6"/>
<path d="M242 534.5L247.2 528.4L251.6 534.5Z" fill="#7c92a6"/>
<g fill="#fff" stroke="#fff" stroke-width="0.2">
<text x="1206" y="64.1" font-size="9.9px" textLength="28.0" lengthAdjust="spacingAndGlyphs">1.2845</text>
<text x="1206" y="111.1" font-size="9.9px" textLength="28.0" lengthAdjust="spacingAndGlyphs">1.2835</text>
<text x="1206" y="158.1" font-size="9.9px" textLength="28.0" lengthAdjust="spacingAndGlyphs">1.2825</text>
<text x="1206" y="205.1" font-size="9.9px" textLength="28.0" lengthAdjust="spacingAndGlyphs">1.2815</text>
<text x="1206" y="252.1" font-size="9.9px" textLength="28.0" lengthAdjust="spacingAndGlyphs">1.2805</text>
<text x="1206" y="299.1" font-size="9.9px" textLength="28.0" lengthAdjust="spacingAndGlyphs">1.2795</text>
<text x="1206" y="346.1" font-size="9.9px" textLength="28.0" lengthAdjust="spacingAndGlyphs">1.2785</text>
<text x="1203.6" y="378.8" font-size="9.9px" textLength="15.1" lengthAdjust="spacingAndGlyphs">100</text>
<text x="1203.6" y="393.8" font-size="9.9px" textLength="10.0" lengthAdjust="spacingAndGlyphs">80</text>
<text x="1203.6" y="460.0" font-size="9.9px" textLength="10.0" lengthAdjust="spacingAndGlyphs">20</text>
<text x="1203.6" y="482" font-size="9.9px" textLength="17.6" lengthAdjust="spacingAndGlyphs">0.00</text>
<text x="1203.6" y="531.3" font-size="9.9px" textLength="13.0" lengthAdjust="spacingAndGlyphs">-50</text>
<text x="213.8" y="547" font-size="9.9px" textLength="50.3" lengthAdjust="spacingAndGlyphs">6 May 2005</text>
<text x="277.8" y="547" font-size="9.9px" textLength="53.0" lengthAdjust="spacingAndGlyphs">6 May 18:55</text>
<text x="341.8" y="547" font-size="9.9px" textLength="53.0" lengthAdjust="spacingAndGlyphs">6 May 19:35</text>
<text x="405.8" y="547" font-size="9.9px" textLength="53.0" lengthAdjust="spacingAndGlyphs">6 May 20:15</text>
<text x="469.8" y="547" font-size="9.9px" textLength="53.0" lengthAdjust="spacingAndGlyphs">6 May 20:55</text>
<text x="533.8" y="547" font-size="9.9px" textLength="53.0" lengthAdjust="spacingAndGlyphs">6 May 21:35</text>
<text x="597.8" y="547" font-size="9.9px" textLength="53.0" lengthAdjust="spacingAndGlyphs">6 May 22:15</text>
<text x="661.8" y="547" font-size="9.9px" textLength="53.0" lengthAdjust="spacingAndGlyphs">6 May 22:55</text>
<text x="725.8" y="547" font-size="9.9px" textLength="53.0" lengthAdjust="spacingAndGlyphs">9 May 00:40</text>
<text x="789.8" y="547" font-size="9.9px" textLength="53.0" lengthAdjust="spacingAndGlyphs">9 May 01:20</text>
<text x="853.8" y="547" font-size="9.9px" textLength="53.0" lengthAdjust="spacingAndGlyphs">9 May 02:00</text>
<text x="917.8" y="547" font-size="9.9px" textLength="53.0" lengthAdjust="spacingAndGlyphs">9 May 02:40</text>
<text x="981.8" y="547" font-size="9.9px" textLength="53.0" lengthAdjust="spacingAndGlyphs">9 May 03:20</text>
<text x="1045.8" y="547" font-size="9.9px" textLength="53.0" lengthAdjust="spacingAndGlyphs">9 May 04:00</text>
<text x="1109.8" y="547" font-size="9.9px" textLength="53.0" lengthAdjust="spacingAndGlyphs">9 May 04:40</text>
<text x="1173.8" y="547" font-size="9.9px" textLength="53.0" lengthAdjust="spacingAndGlyphs">9 May 05:20</text>
<text x="218.8" y="381.9" font-size="9.6px" textLength="157" lengthAdjust="spacingAndGlyphs">0 Aroon(10) 50.0000 20.0000 15.0000</text>
<text x="219.2" y="47.9" font-size="10px" textLength="57.1" lengthAdjust="spacingAndGlyphs">EURUSD,M5</text>
<text x="218.8" y="57.8" font-size="10px" textLength="5.4" lengthAdjust="spacingAndGlyphs">0</text>
</g>
</svg>
<div class="abs dlg-frame" style="left:228px;top:38px;width:446px;height:279px;"></div>
<div class="abs dlg-title" style="left:228px;top:38px;width:446px;height:28px;"></div>
<div class="t " style="left:235.60px;top:46.30px;font-size:15px;color:#fff;font-weight:bold;transform:scaleX(1.0660);transform-origin:0 0;text-shadow:1px 1px 0 #0a2a80;">Custom Indicator - 0 Aroon</div>
<div class="abs tbtn help" style="left:627px;top:43px;width:20px;height:20px;"><span>?</span></div>
<div class="abs tbtn close" style="left:649px;top:43px;width:20px;height:20px;"><svg width="20" height="20" viewBox="0 0 20 20"><path d="M5.7 5.9L13.7 13.9M13.7 5.9L5.7 13.9" stroke="#fff" stroke-width="2.1" stroke-linecap="square"/></svg></div>
<div class="abs dlg-body" style="left:231px;top:66px;width:440px;height:248px;"></div>
<div class="abs pane" style="left:237px;top:93px;width:426px;height:183px;"></div>
<div class="abs tab" style="left:239px;top:75px;width:52px;height:18px;"></div>
<div class="t " style="left:244.50px;top:79.77px;font-size:11.5px;color:#000;transform:scaleX(0.8681);transform-origin:0 0;">Common</div>
<div class="abs tab" style="left:336px;top:75px;width:39px;height:18px;"></div>
<div class="t " style="left:339.80px;top:79.77px;font-size:11.5px;color:#000;transform:scaleX(0.8546);transform-origin:0 0;">Colors</div>
<div class="abs tab" style="left:376px;top:75px;width:42px;height:18px;"></div>
<div class="t " style="left:382.30px;top:79.77px;font-size:11.5px;color:#000;transform:scaleX(0.8934);transform-origin:0 0;">Levels</div>
<div class="abs tab" style="left:419px;top:75px;width:68px;height:18px;"></div>
<div class="t " style="left:425.00px;top:79.77px;font-size:11.5px;color:#000;transform:scaleX(0.8857);transform-origin:0 0;">Visualization</div>
<div class="abs tab sel" style="left:290px;top:73px;width:46px;height:22px;"></div>
<div class="t " style="left:298.60px;top:78.07px;font-size:11.5px;color:#000;transform:scaleX(0.8746);transform-origin:0 0;">Inputs</div>
<div class="abs lv" style="left:249px;top:103px;width:406px;height:154px;"></div>
<div class="abs lvh" style="left:250px;top:104px;width:404px;height:20px;"></div>
<div class="abs lvsep" style="left:449px;top:107px;width:2px;height:14px;"></div>
<div class="abs lvsep" style="left:650px;top:107px;width:2px;height:14px;"></div>
<div class="t " style="left:260.50px;top:109.67px;font-size:11.5px;color:#000;transform:scaleX(0.8926);transform-origin:0 0;">Variable</div>
<div class="t " style="left:460.30px;top:109.67px;font-size:11.5px;color:#000;transform:scaleX(0.9174);transform-origin:0 0;">Value</div>
<div class="abs row odd" style="left:250px;top:124px;width:404px;height:21px;"></div>
<svg class="abs" style="left:253px;top:127px" width="17" height="16" viewBox="0 0 17 16"><defs><linearGradient id="ig" x1="0" y1="0" x2="1" y2="0.3"><stop offset="0" stop-color="#b9d3f4"/><stop offset="0.65" stop-color="#9dc0ee"/><stop offset="1" stop-color="#6d9ad8"/></linearGradient></defs><path d="M0.5 0.9H11.8L15.6 4.2V13.6L13.8 15.3L11.9 13.7L10 15.3L8.1 13.7L6.2 15.3L4.3 13.7L2.4 15.3L0.5 13.7Z" fill="url(#ig)" stroke="#7ea6dc" stroke-width="0.8"/><path d="M11.8 0.9V4.2H15.6Z" fill="#e4effc" stroke="#7ea6dc" stroke-width="0.7"/><text x="1.9" y="11.1" font-size="7.6px" font-weight="bold" fill="#16336e" font-family="Liberation Sans, sans-serif" textLength="11.6" lengthAdjust="spacingAndGlyphs">123</text></svg>
<div class="t " style="left:273.00px;top:129.47px;font-size:11.5px;color:#000;transform:scaleX(0.8963);transform-origin:0 0;">AroonPeriod</div>
<div class="t " style="left:455.50px;top:129.47px;font-size:11.5px;color:#000;transform:scaleX(0.8661);transform-origin:0 0;">10</div>
<div class="abs row" style="left:250px;top:144px;width:404px;height:21px;"></div>
<svg class="abs" style="left:253px;top:147px" width="17" height="16" viewBox="0 0 17 16"><defs><linearGradient id="ig" x1="0" y1="0" x2="1" y2="0.3"><stop offset="0" stop-color="#b9d3f4"/><stop offset="0.65" stop-color="#9dc0ee"/><stop offset="1" stop-color="#6d9ad8"/></linearGradient></defs><path d="M0.5 0.9H11.8L15.6 4.2V13.6L13.8 15.3L11.9 13.7L10 15.3L8.1 13.7L6.2 15.3L4.3 13.7L2.4 15.3L0.5 13.7Z" fill="url(#ig)" stroke="#7ea6dc" stroke-width="0.8"/><path d="M11.8 0.9V4.2H15.6Z" fill="#e4effc" stroke="#7ea6dc" stroke-width="0.7"/><text x="1.9" y="11.1" font-size="7.6px" font-weight="bold" fill="#16336e" font-family="Liberation Sans, sans-serif" textLength="11.6" lengthAdjust="spacingAndGlyphs">123</text></svg>
<div class="t " style="left:273.00px;top:149.47px;font-size:11.5px;color:#000;transform:scaleX(0.9116);transform-origin:0 0;">AroonMode</div>
<div class="t " style="left:455.50px;top:149.47px;font-size:11.5px;color:#000;transform:scaleX(0.8661);transform-origin:0 0;">2</div>
<div class="abs row odd" style="left:250px;top:164px;width:404px;height:21px;"></div>
<svg class="abs" style="left:253px;top:167px" width="17" height="16" viewBox="0 0 17 16"><defs><linearGradient id="ig" x1="0" y1="0" x2="1" y2="0.3"><stop offset="0" stop-color="#b9d3f4"/><stop offset="0.65" stop-color="#9dc0ee"/><stop offset="1" stop-color="#6d9ad8"/></linearGradient></defs><path d="M0.5 0.9H11.8L15.6 4.2V13.6L13.8 15.3L11.9 13.7L10 15.3L8.1 13.7L6.2 15.3L4.3 13.7L2.4 15.3L0.5 13.7Z" fill="url(#ig)" stroke="#7ea6dc" stroke-width="0.8"/><path d="M11.8 0.9V4.2H15.6Z" fill="#e4effc" stroke="#7ea6dc" stroke-width="0.7"/><text x="1.9" y="11.1" font-size="7.6px" font-weight="bold" fill="#16336e" font-family="Liberation Sans, sans-serif" textLength="11.6" lengthAdjust="spacingAndGlyphs">123</text></svg>
<div class="t " style="left:273.00px;top:169.47px;font-size:11.5px;color:#000;transform:scaleX(0.9224);transform-origin:0 0;">ShowLastHigh</div>
<div class="t " style="left:455.50px;top:169.47px;font-size:11.5px;color:#000;transform:scaleX(0.8661);transform-origin:0 0;">1</div>
<div class="abs row" style="left:250px;top:184px;width:404px;height:21px;"></div>
<svg class="abs" style="left:253px;top:187px" width="17" height="16" viewBox="0 0 17 16"><defs><linearGradient id="ig" x1="0" y1="0" x2="1" y2="0.3"><stop offset="0" stop-color="#b9d3f4"/><stop offset="0.65" stop-color="#9dc0ee"/><stop offset="1" stop-color="#6d9ad8"/></linearGradient></defs><path d="M0.5 0.9H11.8L15.6 4.2V13.6L13.8 15.3L11.9 13.7L10 15.3L8.1 13.7L6.2 15.3L4.3 13.7L2.4 15.3L0.5 13.7Z" fill="url(#ig)" stroke="#7ea6dc" stroke-width="0.8"/><path d="M11.8 0.9V4.2H15.6Z" fill="#e4effc" stroke="#7ea6dc" stroke-width="0.7"/><text x="1.9" y="11.1" font-size="7.6px" font-weight="bold" fill="#16336e" font-family="Liberation Sans, sans-serif" textLength="11.6" lengthAdjust="spacingAndGlyphs">123</text></svg>
<div class="t " style="left:273.00px;top:189.47px;font-size:11.5px;color:#000;transform:scaleX(0.9218);transform-origin:0 0;">ShowLastLow</div>
<div class="t " style="left:455.50px;top:189.47px;font-size:11.5px;color:#000;transform:scaleX(0.8661);transform-origin:0 0;">1</div>
<div class="abs row odd" style="left:250px;top:204px;width:404px;height:21px;"></div>
<svg class="abs" style="left:253px;top:207px" width="17" height="16" viewBox="0 0 17 16"><defs><linearGradient id="ig" x1="0" y1="0" x2="1" y2="0.3"><stop offset="0" stop-color="#b9d3f4"/><stop offset="0.65" stop-color="#9dc0ee"/><stop offset="1" stop-color="#6d9ad8"/></linearGradient></defs><path d="M0.5 0.9H11.8L15.6 4.2V13.6L13.8 15.3L11.9 13.7L10 15.3L8.1 13.7L6.2 15.3L4.3 13.7L2.4 15.3L0.5 13.7Z" fill="url(#ig)" stroke="#7ea6dc" stroke-width="0.8"/><path d="M11.8 0.9V4.2H15.6Z" fill="#e4effc" stroke="#7ea6dc" stroke-width="0.7"/><text x="1.9" y="11.1" font-size="7.6px" font-weight="bold" fill="#16336e" font-family="Liberation Sans, sans-serif" textLength="11.6" lengthAdjust="spacingAndGlyphs">123</text></svg>
<div class="t " style="left:273.00px;top:209.47px;font-size:11.5px;color:#000;transform:scaleX(0.8993);transform-origin:0 0;">ShowHistogram</div>
<div class="t " style="left:455.50px;top:209.47px;font-size:11.5px;color:#000;transform:scaleX(0.8661);transform-origin:0 0;">1</div>
<div class="abs " style="left:451px;top:125px;width:1px;height:100px;background:#cfcfcf"></div>
<div class="abs " style="left:427px;top:104px;width:80px;height:135px;border:4px solid #f5145c"></div>
<div class="abs btn def" style="left:429px;top:285px;width:73px;height:21px;"></div>
<div class="t " style="left:457.40px;top:291.07px;font-size:11.5px;color:#000;transform:scaleX(0.9268);transform-origin:0 0;">OK</div>
<div class="abs btn" style="left:510px;top:285px;width:73px;height:21px;"></div>
<div class="t " style="left:529.50px;top:291.07px;font-size:11.5px;color:#000;transform:scaleX(0.9218);transform-origin:0 0;">Cancel</div>
<div class="abs btn" style="left:591px;top:285px;width:73px;height:21px;"></div>
<div class="t " style="left:613.40px;top:291.07px;font-size:11.5px;color:#000;transform:scaleX(0.8987);transform-origin:0 0;">Reset</div>
</div></body></html>
